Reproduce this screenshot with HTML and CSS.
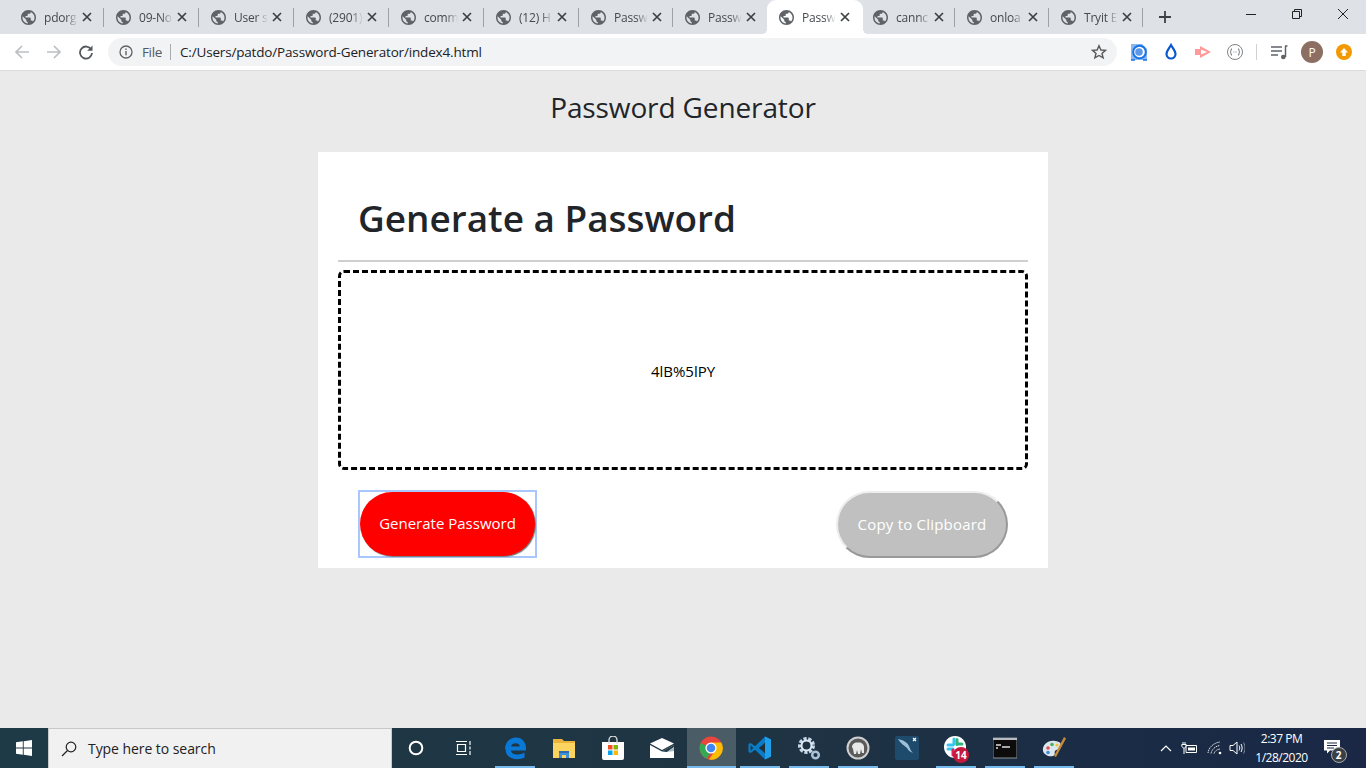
FILE: index.html
```html
<!DOCTYPE html>
<html lang="en">
<head>
<meta charset="utf-8">
<title>Password Generator</title>
<link rel="stylesheet" href="styles.css">
</head>
<body>
<svg class="defs" width="0" height="0" aria-hidden="true">
  <symbol id="globe" viewBox="2 2 20 20">
    <path d="M12 2C6.480 2 2 6.480 2 12s4.480 10 10 10 10-4.480 10-10S17.520 2 12 2zm-1 17.930c-3.950-.490-7-3.850-7-7.930 0-.620.080-1.210.210-1.790L9 15v1c0 1.100.9 2 2 2v1.930zm6.900-2.540c-.260-.810-1-1.390-1.900-1.390h-1v-3c0-.550-.450-1-1-1H8v-2h2c.550 0 1-.450 1-1V7h2c1.100 0 2-.9 2-2v-.410c2.930 1.190 5 4.060 5 7.410 0 2.080-.8 3.970-2.100 5.390z" fill="#5f6368"/>
  </symbol>
  <symbol id="x" viewBox="0 0 10 10">
    <path d="M1 1l8 8M9 1l-8 8" stroke="#3c4043" stroke-width="1.700" fill="none"/>
  </symbol>
</svg>

<header class="chrome-tabs">
  <div class="tab"><svg class="fav"><use href="#globe"/></svg><span class="title">pdorg</span><svg class="close"><use href="#x"/></svg></div>
  <div class="tab"><svg class="fav"><use href="#globe"/></svg><span class="title">09-No</span><svg class="close"><use href="#x"/></svg></div>
  <div class="tab"><svg class="fav"><use href="#globe"/></svg><span class="title">User s</span><svg class="close"><use href="#x"/></svg></div>
  <div class="tab"><svg class="fav"><use href="#globe"/></svg><span class="title">(2901)</span><svg class="close"><use href="#x"/></svg></div>
  <div class="tab"><svg class="fav"><use href="#globe"/></svg><span class="title">comm</span><svg class="close"><use href="#x"/></svg></div>
  <div class="tab"><svg class="fav"><use href="#globe"/></svg><span class="title">(12) H</span><svg class="close"><use href="#x"/></svg></div>
  <div class="tab"><svg class="fav"><use href="#globe"/></svg><span class="title">Passw</span><svg class="close"><use href="#x"/></svg></div>
  <div class="tab no-sep"><svg class="fav"><use href="#globe"/></svg><span class="title">Passw</span><svg class="close"><use href="#x"/></svg></div>
  <div class="tab active"><svg class="fav"><use href="#globe"/></svg><span class="title">Passw</span><svg class="close"><use href="#x"/></svg></div>
  <div class="tab"><svg class="fav"><use href="#globe"/></svg><span class="title">cannc</span><svg class="close"><use href="#x"/></svg></div>
  <div class="tab"><svg class="fav"><use href="#globe"/></svg><span class="title">onloa</span><svg class="close"><use href="#x"/></svg></div>
  <div class="tab"><svg class="fav"><use href="#globe"/></svg><span class="title">Tryit E</span><svg class="close"><use href="#x"/></svg></div>
  <svg class="new-tab" viewBox="0 0 14 14"><path d="M7 1v12M1 7h12" stroke="#3c4043" stroke-width="1.800"/></svg>
  <div class="win-controls">
    <svg class="win" viewBox="0 0 46 28"><path d="M18 14.500h10" stroke="#222" fill="none"/></svg>
    <svg class="win" viewBox="0 0 46 28"><path d="M18.500 11.500h7v7h-7zM20.500 11.500v-2h7v7h-2" stroke="#222" fill="none"/></svg>
    <svg class="win" viewBox="0 0 46 28"><path d="M18 9l10 10M28 9L18 19" stroke="#222" fill="none"/></svg>
  </div>
</header>

<nav class="toolbar">
  <svg class="nav-btn" viewBox="0 0 16 16"><path d="M15 8H2M8 2L2 8l6 6" stroke="#bcbfc2" stroke-width="1.700" fill="none"/></svg>
  <svg class="nav-btn" viewBox="0 0 16 16"><path d="M1 8h13M8 2l6 6-6 6" stroke="#bcbfc2" stroke-width="1.700" fill="none"/></svg>
  <svg class="nav-btn" viewBox="0 0 16 16"><path d="M13.200 5.500A6 6 0 1 0 14 9" stroke="#55585c" stroke-width="1.800" fill="none"/><path d="M14.500 1.500v5.300H9.200z" fill="#55585c"/></svg>
  <div class="omnibox">
    <svg class="info" viewBox="0 0 14 14"><circle cx="7" cy="7" r="6" stroke="#5f6368" stroke-width="1.300" fill="none"/><path d="M7 6v4.200M7 3.500v1.400" stroke="#5f6368" stroke-width="1.400"/></svg>
    <span class="scheme">File</span>
    <span class="url-sep"></span>
    <span class="url">C:/Users/patdo/Password-Generator/index4.html</span>
    <svg class="star" viewBox="0 0 16 16"><path d="M8 1.700l1.900 4.300 4.600.4-3.500 3 1.100 4.500L8 11.500l-4.100 2.400L5 9.400l-3.500-3 4.600-.4z" stroke="#55585c" stroke-width="1.400" fill="none"/></svg>
  </div>
  <div class="extensions">
    <svg class="ext" viewBox="0 0 18 18"><path d="M1 1h11l5 5v11H1z" fill="#8ab8f0"/><circle cx="9.500" cy="9" r="6.300" fill="#fff" stroke="#1a73e8" stroke-width="2"/><circle cx="9" cy="9" r="3.800" fill="#5c97e8"/><path d="M1 17h4M13 17h4" stroke="#1a73e8" stroke-width="1.500"/></svg>
    <svg class="ext" viewBox="0 0 18 18"><path d="M9 2c2 3.500 4.500 6 4.500 9a4.500 4.500 0 0 1-9 0C4.500 8 7 5.500 9 2z" stroke="#0b57d0" stroke-width="2.200" fill="#fff"/></svg>
    <svg class="ext" viewBox="0 0 18 18"><path d="M1 6h5V3l11 6-11 6v-3H1z" fill="#ff9a9a"/><path d="M7 6.500l6 2.500-6 2.500z" fill="#fff"/></svg>
    <svg class="ext" viewBox="0 0 18 18"><circle cx="9" cy="9" r="7.500" stroke="#808488" fill="#fff"/><path d="M6 5.500c-1.500 0-.5 3.500-1.800 3.500C5.500 9 4.500 12.500 6 12.500M12 5.500c1.500 0 .5 3.500 1.800 3.500C12.500 9 13.500 12.500 12 12.500M7.500 9h.8M9.700 9h.8" stroke="#666a6e" fill="none"/></svg>
    <span class="ext-sep"></span>
    <svg class="ext music" viewBox="0 0 18 18"><path d="M1 4h11M1 8h11M1 12h7" stroke="#5f6368" stroke-width="1.500"/><path d="M15.500 3v11" stroke="#5f6368" stroke-width="1.500"/><circle cx="13.300" cy="14" r="2.300" fill="#5f6368"/><path d="M15 3h2.500" stroke="#5f6368" stroke-width="1.500"/></svg>
    <span class="avatar">P</span>
    <span class="update"><svg viewBox="0 0 10 10" class="update-arrow"><path d="M5 1l4 4.500H6.700V9H3.300V5.500H1z" fill="#fff"/></svg></span>
  </div>
</nav>

<main class="page">
  <h1 class="page-title">Password Generator</h1>
  <section class="card">
    <h2 class="card-title">Generate a Password</h2>
    <hr class="rule">
    <div class="output">4lB%5lPY</div>
    <div class="actions">
      <span class="focus-ring"><button class="btn btn-red" type="button">Generate Password</button></span>
      <button class="btn btn-grey" type="button">Copy to Clipboard</button>
    </div>
  </section>
</main>

<footer class="taskbar">
  <div class="start"><svg class="win-logo" viewBox="0 0 16 16"><path d="M0 2.300l6.800-1v6.200H0zM7.700 1.200L16 0v7.500H7.700zM0 8.400h6.800v6.300l-6.800-1zM7.700 8.400H16V16l-8.300-1.200z" fill="#fff"/></svg></div>
  <div class="search">
    <svg class="search-icon" viewBox="0 0 16 16"><circle cx="10" cy="6" r="4.800" stroke="#222" stroke-width="1.200" fill="none"/><path d="M6.500 9.500L1 15" stroke="#222" stroke-width="1.300"/></svg>
    <span>Type here to search</span>
  </div>
  <div class="sys-btn"><svg class="cortana" viewBox="0 0 16 16"><circle cx="8" cy="8" r="6.300" stroke="#fff" stroke-width="2" fill="none"/></svg></div>
  <div class="sys-btn"><svg class="taskview" viewBox="0 0 18 16"><path d="M1 1.500h11M1 14.500h11M2.500 4.500h8v7h-8zM15 1v4M15 6.500v3M15 11v4" stroke="#fff" stroke-width="1.200" fill="none"/></svg></div>

  <div class="apps">
    <div class="app on"><svg class="app-icon" viewBox="0 0 24 24"><path d="M2 13C2 6 7 1.500 13 1.500c6 0 10 4.500 10 11v2H8c.5 4.500 7.500 5.500 13.500 2v5c-7 3.500-19 2-19-8.500zM8.200 10.500h8.600c0-4-8-4.500-8.600 0z" fill="#0a78d7"/></svg></div>
    <div class="app"><svg class="app-icon" viewBox="0 0 24 24"><path d="M1 3h9l2 2h11v17H1z" fill="#e9b33c"/><path d="M1 7h22v15H1z" fill="#fbd560"/><path d="M7 15h10v7h-3v-3h-4v3H7z" fill="#3d8fd6"/><path d="M7 15h10v2H7z" fill="#2a6fb5"/></svg></div>
    <div class="app"><svg class="app-icon" viewBox="0 0 24 24"><path d="M1 6h22v16a2 2 0 0 1-2 2H3a2 2 0 0 1-2-2z" fill="#fff"/><path d="M8 8V4a4 4 0 0 1 8 0v4" stroke="#ddd" stroke-width="1.300" fill="none"/><path d="M7 9h4.500v4.500H7z" fill="#f25022"/><path d="M12.500 9H17v4.500h-4.500z" fill="#7fba00"/><path d="M7 14.500h4.500V19H7z" fill="#00a4ef"/><path d="M12.500 14.500H17V19h-4.500z" fill="#ffb900"/></svg></div>
    <div class="app"><svg class="app-icon" viewBox="0 0 24 24"><path d="M0 7.500L12 2l12 5.500-12 6.500z" fill="#fff"/><path d="M0 9l12 6.500L24 9v13H0z" fill="#fff"/><path d="M12 15.500L24 9v2l-7 5-5-.5z" fill="#1f3a46"/><path d="M17 16l7-5v4z" fill="#a9b8bf"/></svg></div>
    <div class="app on active"><svg class="app-icon" viewBox="0 0 24 24"><circle cx="12" cy="12" r="11.500" fill="#e8453c"/><path d="M12 12L1.900 6.900A11.500 11.500 0 0 0 8.500 23z" fill="#34a853"/><path d="M12 6.500h10.300A11.500 11.500 0 0 1 10 23.400l4.500-6.500z" fill="#fbbc05"/><circle cx="12" cy="12" r="5.600" fill="#fff"/><circle cx="12" cy="12" r="4.300" fill="#4285f4"/></svg></div>
    <div class="app on"><svg class="app-icon" viewBox="0 0 24 24"><path d="M17 .5L23 3.500v17L17 23.500 7 13.800l-4.300 3.300L.5 16v-8l2.200-1.100L7 10.200z" fill="#0a7cc7"/><path d="M17 .5L23 3.500v17L17 23.500z" fill="#1f9fe8"/><path d="M17 6.800L10.800 12l6.200 5.200z" fill="#1f2f3a"/><path d="M2.700 9.300L5.200 12l-2.500 2.700z" fill="#1f2f3a"/></svg></div>
    <div class="app on"><svg class="app-icon gears" viewBox="0 0 24 24"><circle cx="9.500" cy="9.500" r="6.500" stroke="#c5d8ea" stroke-width="4" fill="none" stroke-dasharray="3 1.500"/><circle cx="9.500" cy="9.500" r="5" stroke="#dfe9f2" stroke-width="2" fill="none"/><circle cx="18.500" cy="19" r="3.300" stroke="#a9c2d8" stroke-width="2.500" fill="none"/></svg></div>
    <div class="app on"><svg class="app-icon" viewBox="0 0 24 24"><circle cx="12" cy="12" r="10.500" fill="#5a5a5a" stroke="#cfcfcf" stroke-width="2"/><path d="M6 11c0-3 3-5 6-4.500 3-.5 6 1.500 6 4.500v6h-2l-1-4-1 5h-2l-1-4-1 4H8l-1-5z" fill="#e8e8e8"/></svg></div>
    <div class="app"><svg class="app-icon" viewBox="0 0 24 24"><rect x="0" y="0" width="24" height="24" rx="2" fill="#1e4a6b"/><path d="M3 3c5 1 9 3 11 7 1 3 2 5 4 7-3-1-5-3-6-5-2-2-6-4-9-9z" fill="#9cc0d8"/><path d="M18 2l3 3M21 2l-3 3" stroke="#fff" stroke-width="1.200"/></svg></div>
    <div class="app on"><div class="badge-wrap"><svg class="app-icon" viewBox="0 0 24 24"><circle cx="11" cy="11" r="11" fill="#fff"/><path d="M10 3v5M4 13h5" stroke="#36c5f0" stroke-width="3" stroke-linecap="round"/><path d="M13 3.500v5M13 8h5" stroke="#2eb67d" stroke-width="3" stroke-linecap="round"/><path d="M4 9h5" stroke="#36c5f0" stroke-width="3" stroke-linecap="round"/><path d="M9 14v5" stroke="#e01e5a" stroke-width="3" stroke-linecap="round"/></svg><span class="badge">14</span></div></div>
    <div class="app on"><svg class="app-icon" viewBox="0 0 24 24"><rect x="0" y="2" width="24" height="20" fill="#0c0c0c" stroke="#8a8f93"/><path d="M0 2h24v2H0z" fill="#b8bcc0"/><path d="M3 9h5M3 12h2M9 11h8" stroke="#ddd" stroke-width="1.300"/></svg></div>
    <div class="app on"><svg class="app-icon" viewBox="0 0 24 24"><path d="M1 15C0 9 6 4 13 5c5 .5 7 3 6 6-1 3-5 2-6 4s1 4-2 5c-4 1-9-1-10-5z" fill="#dce6ee"/><circle cx="6" cy="12" r="1.800" fill="#e05050"/><circle cx="10" cy="8.500" r="1.800" fill="#4caf50"/><circle cx="15" cy="9" r="1.500" fill="#f2c230"/><circle cx="6" cy="16.500" r="1.800" fill="#3a8fd8"/><path d="M22 1l2 1.500L14 21l-2-1z" fill="#c98a3a"/></svg></div>
  </div>

  <div class="tray">
    <svg class="tray-chev" viewBox="0 0 12 8"><path d="M1 7l5-5 5 5" stroke="#fff" stroke-width="1.200" fill="none"/></svg>
    <svg class="tray-bat" viewBox="0 0 17 14"><path d="M5 4.500h10.500v7H5z" stroke="#fff" fill="none"/><path d="M7 6.500h7v3H7z" fill="#fff"/><path d="M2 1v2.500M4 1v2.500M.8 3.500h4.400v2L3 7.500.8 5.500zM3 7.500V13" stroke="#fff" fill="none"/></svg>
    <svg class="tray-wifi" viewBox="0 0 16 14"><path d="M1 12c.5-5 5-10 12-11M4 12.500C4.500 9 8 5 13 4.500M7 12.500c.5-2 2.500-4 6-4.500" stroke="#e8e8e8" stroke-dasharray="1.400 .7" fill="none"/><circle cx="13" cy="12" r="1.300" fill="#fff"/></svg>
    <svg class="tray-vol" viewBox="0 0 16 14"><path d="M1 4.500h3L8 1v12L4 9.500H1z" stroke="#fff" fill="none"/><path d="M10 4.500c1 1.500 1 3.500 0 5M12 3c1.500 2.500 1.500 5.500 0 8" stroke="#fff" fill="none"/><path d="M14.500 1.500c2 3.500 2 7.500 0 11" stroke="#8894a3" fill="none"/></svg>
    <div class="clock"><span>2:37 PM</span><span>1/28/2020</span></div>
    <div class="notif-wrap"><svg class="notif" viewBox="0 0 16 14"><path d="M0 0h16v10.500H6l-3 3v-3H0z" fill="#fff"/><path d="M3 3h10M3 5.500h10M3 8h7" stroke="#1b2a44"/></svg><span class="notif-count">2</span></div>
  </div>
</footer>
</body>
</html>
```

FILE: styles.css
```css
* { box-sizing: border-box; }
html, body { margin: 0; height: 100%; }
body {
  width: 1366px;
  height: 768px;
  overflow: hidden;
  display: flex;
  flex-direction: column;
  font-family: "Open Sans", "Noto Sans", sans-serif;
  background: #eaeaea;
  color: #212529;
}
.defs { display: block; height: 0; }

/* tabs */
.chrome-tabs {
  flex: 0 0 34px;
  display: flex;
  align-items: stretch;
  padding-left: 9px;
  background: #dee1e6;
}
.tab {
  position: relative;
  flex: 0 0 95px;
  display: flex;
  align-items: center;
  padding-left: 12px;
  font-size: 12px;
  color: #45494e;
}
.tab:nth-child(n+7) { flex-basis: 94px; }
.tab::after {
  content: "";
  position: absolute;
  right: 0;
  top: 8px;
  width: 1px;
  height: 19px;
  background: #9ea1a5;
}
.tab.no-sep::after { display: none; }
.tab.active {
  flex-basis: 96px;
  margin-right: -2px;
  background: #fff;
  border-radius: 9px 9px 0 0;
}
.tab.active::before,
.tab.active::after {
  content: "";
  position: absolute;
  bottom: 0;
  top: auto;
  width: 5px;
  height: 5px;
  background: radial-gradient(circle at 0 0, transparent 5px, #fff 5px);
}
.tab.active::before { left: -5px; }
.tab.active::after {
  right: -5px;
  background: radial-gradient(circle at 100% 0, transparent 5px, #fff 5px);
}
.fav { flex: none; width: 15px; height: 15px; }
.title {
  flex: none;
  width: 34px;
  margin-left: 8px;
  overflow: hidden;
  white-space: nowrap;
  letter-spacing: -.2px;
  -webkit-mask-image: linear-gradient(90deg, #000 65%, transparent 100%);
  mask-image: linear-gradient(90deg, #000 65%, transparent 100%);
}
.close { flex: none; width: 10px; height: 10px; margin-left: 4px; }
.new-tab { flex: none; width: 14px; height: 14px; margin: 10px 0 0 15px; }
.win-controls { margin-left: auto; display: flex; align-items: flex-start; }
.win { display: block; width: 46px; height: 28px; }

/* toolbar */
.toolbar {
  flex: 0 0 37px;
  display: flex;
  align-items: center;
  padding: 0 0 0 14px;
  background: #fff;
  border-bottom: 1px solid #dcdcdc;
}
.nav-btn { flex: none; width: 16px; height: 16px; margin-right: 16px; }
.omnibox {
  flex: 0 0 1009px;
  margin-left: -2px;
  height: 28px;
  border-radius: 14px;
  background: #f1f3f4;
  display: flex;
  align-items: center;
  padding-left: 11px;
  font-size: 13.500px;
  color: #202124;
}
.info { flex: none; width: 14px; height: 14px; }
.scheme { margin-left: 9px; color: #55585c; letter-spacing: -.35px; }
.url-sep { width: 1px; height: 16px; background: #a8abaf; margin: 0 9px 0 8px; }
.url { letter-spacing: -.17px; }
.star { width: 16px; height: 16px; margin-left: auto; margin-right: 10px; }
.extensions { flex: 1; display: flex; align-items: center; padding-left: 13px; }
.ext { flex: none; width: 18px; height: 18px; margin-right: 14px; }
.ext-sep { width: 1px; height: 16px; background: #d0d2d4; margin: 0 13px 0 -2px; }
.ext.music { margin-right: 13px; }
.avatar {
  flex: none;
  width: 22px;
  height: 22px;
  border-radius: 50%;
  background: #8d6e63;
  color: #fff;
  font-size: 12px;
  display: flex;
  align-items: center;
  justify-content: center;
}
.update {
  flex: none;
  width: 16px;
  height: 16px;
  margin-left: 13px;
  border-radius: 50%;
  background: #f29900;
  display: flex;
  align-items: center;
  justify-content: center;
}
.update-arrow { width: 10px; height: 10px; }

/* page */
.page {
  flex: 1;
  display: flex;
  flex-direction: column;
  align-items: center;
}
.page-title {
  margin: 18px 0 0;
  font-size: 28px;
  line-height: 36px;
  font-weight: 400;
  letter-spacing: -.12px;
  color: #212529;
}
.card {
  width: 730px;
  height: 416px;
  margin-top: 27px;
  padding: 0 20px;
  background: #fff;
}
.card-title {
  margin: 0;
  padding: 42px 0 0 20px;
  font-size: 36.900px;
  line-height: 48px;
  font-weight: 600;
  color: #212529;
}
.rule {
  margin: 18px 0 0;
  border: 0;
  height: 2px;
  background: #cfcfcf;
}
.output {
  margin-top: 8px;
  height: 200px;
  padding-top: 1px;
  border: 3px dashed #000;
  border-radius: 6px;
  display: flex;
  align-items: center;
  justify-content: center;
  font-size: 15px;
  color: #000;
}
.actions {
  display: flex;
  justify-content: space-between;
  align-items: flex-end;
  padding: 20px 20px 0;
}
.focus-ring {
  display: block;
  width: 179px;
  height: 68px;
  border: 2px solid #a9c6fd;
}
.btn {
  display: block;
  font: inherit;
  font-size: 15px;
  color: #fff;
  border-radius: 35px;
  padding: 0 0 2px;
}
.btn-red {
  width: 175px;
  height: 64px;
  background: #f00;
  border: 0;
  box-shadow: 1px 1px 1px #777;
}
.btn-grey {
  width: 172px;
  height: 67px;
  letter-spacing: .2px;
  background: #c0c0c0;
  border: 2px solid;
  border-color: #ededed #999 #999 #ededed;
}

/* taskbar */
.taskbar {
  flex: 0 0 40px;
  display: flex;
  align-items: stretch;
  background: linear-gradient(90deg, #1e3a46 0%, #1f3443 55%, #1a2b46 85%, #1a2845 100%);
  color: #fff;
}
.start { flex: 0 0 48px; display: flex; align-items: center; justify-content: center; }
.win-logo { width: 16px; height: 16px; }
.search {
  flex: 0 0 344px;
  display: flex;
  align-items: center;
  gap: 11px;
  padding-left: 12px;
  background: #f1f1f1;
  border: 1px solid #c8c8c8;
  border-width: 1px 1px 0;
  font-size: 14px;
  letter-spacing: -.06px;
  color: #222;
}
.search-icon { width: 16px; height: 16px; }
.sys-btn { flex: 0 0 48px; display: flex; align-items: center; justify-content: center; }
.cortana { width: 16px; height: 16px; }
.taskview { width: 18px; height: 16px; }
.apps { display: flex; margin-left: 2.500px; }
.app {
  flex: 0 0 49px;
  display: flex;
  align-items: center;
  justify-content: center;
}
.app.on {
  background: linear-gradient(#76b9ed, #76b9ed) center bottom / 40px 2px no-repeat;
}
.app.on.active {
  background: linear-gradient(#76b9ed, #76b9ed) center bottom / 100% 2px no-repeat, #4a5c66;
}
.app-icon { display: block; width: 24px; height: 24px; }
.badge-wrap { position: relative; width: 24px; height: 24px; }
.badge {
  position: absolute;
  left: 9px;
  top: 11px;
  width: 16px;
  height: 16px;
  border-radius: 50%;
  background: #c4183c;
  font-size: 10px;
  font-weight: 700;
  line-height: 16px;
  text-align: center;
}
.tray { flex: 1; display: flex; align-items: center; padding-left: 81px; }
.tray-chev { width: 12px; height: 8px; }
.tray-bat { width: 17px; height: 14px; margin-left: 9px; }
.tray-wifi { width: 16px; height: 14px; margin-left: 9px; }
.tray-vol { width: 16px; height: 14px; margin-left: 6px; }
.clock {
  width: 64px;
  margin-left: 5px;
  display: flex;
  flex-direction: column;
  align-items: center;
  font-size: 12px;
  line-height: 19px;
  letter-spacing: -.5px;
}
.notif-wrap { position: relative; width: 17px; height: 14px; margin: -2px 0 0 10px; }
.notif { display: block; width: 16px; height: 14px; }
.notif-count {
  position: absolute;
  left: 7px;
  top: 7px;
  width: 16px;
  height: 16px;
  border-radius: 50%;
  background: #3a3f45;
  border: 1px solid #aaa;
  font-size: 10px;
  font-weight: 700;
  line-height: 14px;
  text-align: center;
}
```
